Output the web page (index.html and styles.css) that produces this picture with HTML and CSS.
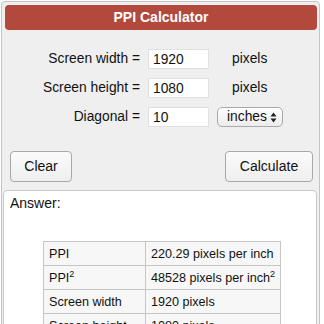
FILE: index.html
```html
<!DOCTYPE html>
<html>
<head>
<meta charset="utf-8">
<link rel="stylesheet" href="styles.css">
</head>
<body>
<div class="panel">
  <div class="header">PPI Calculator</div>
  <div class="form">
    <div class="label">Screen width =</div>
    <div class="field">1920</div>
    <div class="unit">pixels</div>
    <div class="label">Screen height =</div>
    <div class="field">1080</div>
    <div class="unit">pixels</div>
    <div class="label">Diagonal =</div>
    <div class="field">10</div>
    <div class="select">
      <span>inches</span>
      <svg class="arrows" width="7" height="11" viewBox="0 0 7 11"><path d="M3.5 0.5 L6.5 4.5 L0.5 4.5 Z M3.5 10.5 L6.5 6.5 L0.5 6.5 Z" fill="#222"/></svg>
    </div>
  </div>
  <div class="buttons">
    <div class="btn btn-clear">Clear</div>
    <div class="btn btn-calc">Calculate</div>
  </div>
  <div class="answer">
    <div class="answer-title">Answer:</div>
    <table class="result">
      <tr><td class="c1">PPI</td><td class="c2">220.29 pixels per inch</td></tr>
      <tr><td class="c1">PPI<sup>2</sup></td><td class="c2">48528 pixels per inch<sup>2</sup></td></tr>
      <tr><td class="c1">Screen width</td><td class="c2">1920 pixels</td></tr>
      <tr><td class="c1">Screen height</td><td class="c2">1080 pixels</td></tr>
    </table>
  </div>
</div>
</body>
</html>
```
FILE: styles.css
```css
html, body {
  margin: 0;
  padding: 0;
  background: #ffffff;
  overflow: hidden;
}
body {
  font-family: "Liberation Sans", Arial, sans-serif;
  color: #111;
  height: 324px;
}
.panel {
  margin: 1px 0 0 1px;
  width: 319px;
  height: 340px;
  box-sizing: border-box;
  border: 1px solid #c4c4c4;
  border-radius: 4px;
  background: #efefef;
}
.header {
  margin: 3px 2px 0 3px;
  height: 25px;
  background: #b3493c;
  border-radius: 4px;
  color: #fff;
  font-weight: bold;
  font-size: 14px;
  line-height: 25px;
  text-align: center;
}
.form {
  margin-top: 19px;
  display: grid;
  grid-template-columns: 138px 61px 68px;
  column-gap: 8px;
  row-gap: 9px;
  grid-auto-rows: 20px;
  font-size: 13.8px;
  align-items: center;
}
.label {
  text-align: right;
  line-height: 20px;
}
.field {
  height: 20px;
  box-sizing: border-box;
  background: #fff;
  border: 1px solid #e0e0e0;
  padding-left: 4px;
  line-height: 19px;
}
.unit {
  padding-left: 15px;
  line-height: 20px;
}
.select {
  height: 20px;
  width: 66px;
  box-sizing: border-box;
  border: 1px solid #a9a9a9;
  border-radius: 5px;
  background: linear-gradient(#ffffff, #ececec);
  display: flex;
  align-items: center;
  justify-content: space-between;
  padding: 0 5px 0 9px;
  line-height: 18px;
}
.arrows {
  display: block;
}
.buttons {
  margin-top: 24px;
  display: flex;
  justify-content: space-between;
  padding: 0 6px 0 8px;
}
.btn {
  height: 31px;
  box-sizing: border-box;
  border: 1px solid #a8a8a8;
  border-radius: 4px;
  background: linear-gradient(#fbfbfb, #efefef);
  font-size: 14px;
  line-height: 29px;
  text-align: center;
}
.btn-clear { width: 62px; }
.btn-calc { width: 88px; }
.answer {
  margin: 8px 2px 0 1px;
  height: 200px;
  box-sizing: border-box;
  border: 1px solid #c8c8c8;
  border-radius: 4px;
  background: #fff;
  padding: 4px 0 0 6px;
}
.answer-title {
  font-size: 14px;
  line-height: 16px;
}
.result {
  margin: 30px 0 0 33px;
  border-collapse: collapse;
  font-size: 12.6px;
}
.result td {
  border: 1px solid #c6c6c6;
  background: #f7f7f7;
  height: 24px;
  box-sizing: border-box;
  padding: 0 5px;
  vertical-align: middle;
  line-height: 16px;
  white-space: nowrap;
}
.result .c1 { width: 102px; }
.result .c2 { width: 135px; }
.result sup {
  font-size: 9px;
  line-height: 0;
  vertical-align: 5px;
}
```
